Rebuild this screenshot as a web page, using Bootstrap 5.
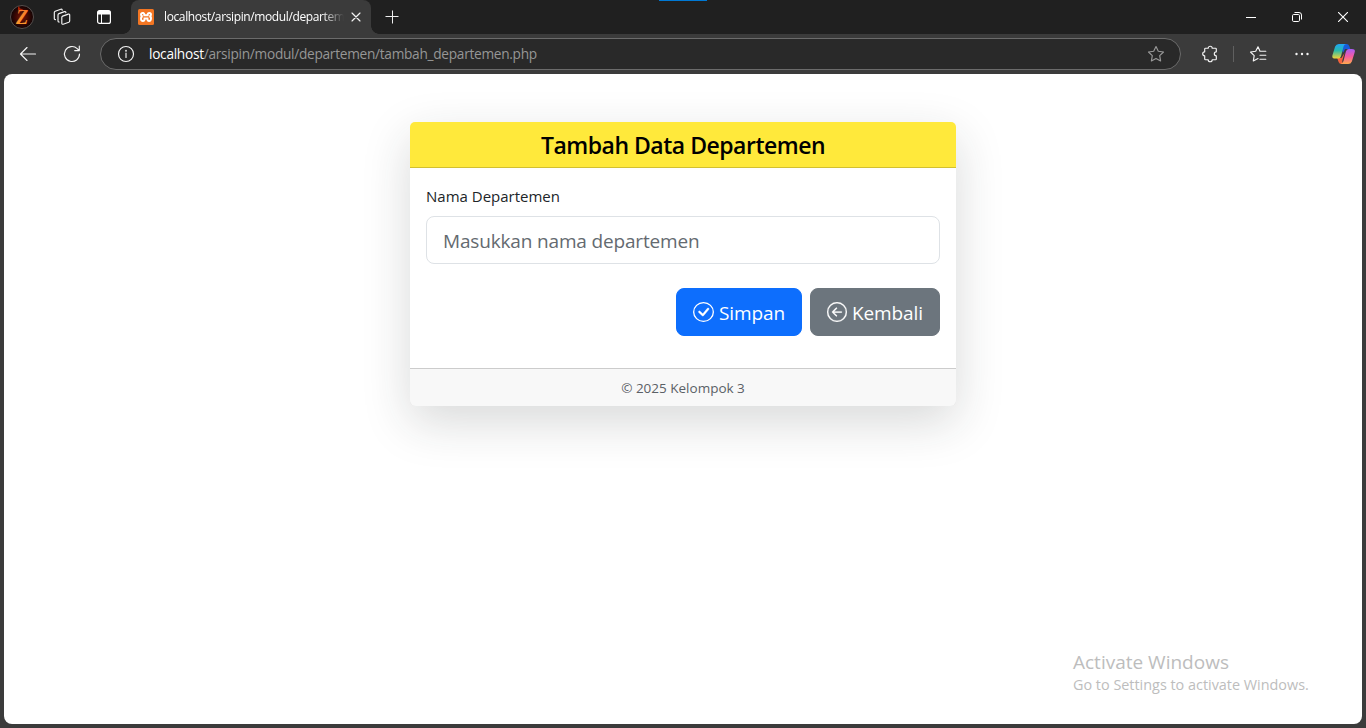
<!DOCTYPE html>
<html lang="id">
<head>
<meta charset="utf-8">
<meta name="viewport" content="width=device-width, initial-scale=1">
<title>Tambah Data Departemen</title>
<link href="https://cdn.jsdelivr.net/npm/bootstrap@5.3.0/dist/css/bootstrap.min.css" rel="stylesheet">
<script src="https://cdn.jsdelivr.net/npm/bootstrap@5.3.0/dist/js/bootstrap.bundle.min.js" defer></script>
<style>
body{font-family:"Open Sans","Noto Sans",sans-serif;background:#3b3b3b;height:728px;overflow:hidden}
svg{display:block;flex:none}
.line-icon{fill:none;stroke:#f4f4f4;stroke-width:1.15;stroke-linecap:round;stroke-linejoin:round}
.line-icon.muted-star{stroke:#999}
.tab-strip{height:34px;background:#202020}
.top-accent{width:48px;height:1px;left:659px;top:0;background:#0078d4}
.cell-36{width:36px}.cell-42{width:42px}.cell-44{width:44px}.cell-46{width:46px}.cell-48{width:48px}
.cell{height:100%;display:flex;align-items:center;justify-content:center;flex:none}
.browser-tab{width:240px;height:34px;margin-left:3px;padding:0 9px 0 7px;background:#3b3b3b;border-radius:8px 8px 0 0;position:relative}
.browser-tab::before,.browser-tab::after{content:"";position:absolute;bottom:0;width:8px;height:8px}
.browser-tab::before{left:-8px;background:radial-gradient(circle at 0 0,transparent 7.5px,#3b3b3b 8px)}
.browser-tab::after{right:-8px;background:radial-gradient(circle at 100% 0,transparent 7.5px,#3b3b3b 8px)}
.tab-label{width:182px;margin-left:10px;font-size:12px;letter-spacing:-.38px;color:#fff;white-space:nowrap;-webkit-mask-image:linear-gradient(90deg,#000 158px,transparent 180px);mask-image:linear-gradient(90deg,#000 158px,transparent 180px)}
.toolbar{height:40px}
.address{width:1081px;height:32px;background:#292929;border:1px solid #6b6b6b;border-radius:16px;padding:0 15px 0 16px;font-size:13.7px;letter-spacing:-.29px;color:#969696}
.address b{font-weight:400;color:#fff}
.url-text{margin-left:14px}
.bar-sep{width:1px;height:16px;background:#606060;margin:0 2px 0 1px}
.viewport{height:650px;margin:0 4px;border-radius:8px;padding-top:48px}
.form-card{width:546px;border:0}
.form-card .card-header{background:#ffe93b;color:#000;height:46px}
.form-card .card-footer{height:38px;font-size:13.5px;line-height:23px;color:#5b6066}
.form-title{font-size:23px;line-height:30px;font-weight:600;letter-spacing:-.49px;white-space:nowrap}
.form-card .form-label{font-size:15px;line-height:24px}
.form-card .form-control{font-size:19px;letter-spacing:-.16px;height:48px;padding-top:9px;padding-bottom:7px}
.form-card .form-control::placeholder{color:#646a70}
.form-card .btn{font-size:19px;height:48px;padding:0 16px;display:flex;align-items:center;gap:5px;white-space:nowrap}
.form-card .btn span{padding-top:2px;letter-spacing:-.1px}
.save-btn{width:126px}.back-btn{width:130px}
.form-card .btn-secondary{--bs-btn-bg:#6c757d;--bs-btn-border-color:#6c757d}
.activation{left:1073px;top:651px;color:#bdbdbd;white-space:nowrap}
.activation-title{font-size:19px;line-height:22px}
.activation-note{font-size:14.4px;line-height:23px}
</style>
</head>
<body>
<header>
  <div class="tab-strip d-flex position-relative">
    <div class="top-accent position-absolute"></div>
    <div class="cell cell-44">
      <svg width="24" height="24" viewBox="0 0 24 24"><defs><radialGradient id="ember"><stop stop-color="#7a1705"/><stop offset=".6" stop-color="#390704"/><stop offset="1" stop-color="#100404"/></radialGradient><linearGradient id="flame" x2="0" y2="1"><stop stop-color="#f4702a"/><stop offset="1" stop-color="#ffa12e"/></linearGradient></defs><circle cx="12" cy="12" r="11.5" fill="url(#ember)" stroke="#66605e" stroke-width=".8"/><path d="M8 5Q7.500 2 9 1Q9.500 4 12 4L14 5.500Z" fill="#a82206"/><text x="12" y="19" text-anchor="middle" font-family="Liberation Serif,serif" font-weight="700" font-style="italic" font-size="20" fill="url(#flame)">Z</text></svg>
    </div>
    <div class="cell cell-36">
      <svg class="line-icon" width="18" height="18" viewBox="0 0 18 18"><path d="m9.700 8.100 5.600-2q1.400-.4 1.400 1v5.700q0 1-.9 1.400l-5.600 2q-1.400.4-1.400-1V9.500q0-1 .9-1.400ZM6.200 14q-1.200.1-1.200-1.200V7q0-1 .9-1.400l5.600-2q1.300-.3 1.400 1M2.500 11.600q-1.200.1-1.200-1.200V4.600q0-1 .9-1.400l5.600-2q1.300-.3 1.400 1"/></svg>
    </div>
    <div class="cell cell-48">
      <svg width="14" height="14" viewBox="0 0 14 14"><rect x=".6" y=".6" width="12.800" height="12.800" rx="2" fill="none" stroke="#fff" stroke-width="1.2"/><path d="M.5 4.500V2.500q0-2 2-2h9q2 0 2 2v2Z" fill="#fff"/><path d="M4.500 4v9" stroke="#fff"/></svg>
    </div>
    <div class="browser-tab d-flex align-items-center">
      <svg width="16" height="16" viewBox="0 0 16 16"><rect width="16" height="16" rx="1.500" fill="#f37623"/><path d="M5.800 4H4.700Q3 4 3 5.600T4.700 7.300Q3 7.600 3 9.800T4.900 12Q6.500 12 6.500 10.300V9.500h3v.8Q9.500 12 11.100 12T13 9.800 11.300 7.300Q13 7.200 13 5.600T11.300 4Q9.700 4 9.700 5.600v.7H6.300v-.7Q6.300 4 4.700 4" fill="none" stroke="#fff" stroke-width="1.900"/></svg>
      <div class="tab-label">localhost/arsipin/modul/departem</div>
      <svg class="line-icon ms-auto" width="12" height="12" viewBox="0 0 12 12"><path d="m2 2 8 8M10 2l-8 8"/></svg>
    </div>
    <div class="cell cell-42"><svg width="14" height="14" viewBox="0 0 14 14"><path d="M7.500.5v13M.5 6.500h13" stroke="#eee"/></svg></div>
    <div class="d-flex ms-auto">
      <div class="cell cell-46"><svg width="10" height="10" viewBox="0 0 10 10"><path d="M0 5.500h10" stroke="#fff"/></svg></div>
      <div class="cell cell-46"><svg width="10" height="10" viewBox="0 0 10 10" fill="none" stroke="#fff"><rect x=".5" y="2.500" width="7" height="7" rx="1.200"/><path d="M2.500.5H7q2.500 0 2.500 2.500v4.500"/></svg></div>
      <div class="cell cell-46"><svg width="10" height="10" viewBox="0 0 10 10"><path d="m0 0 10 10M10 0 0 10" stroke="#fff" stroke-width="1.1"/></svg></div>
    </div>
  </div>
  <div class="toolbar d-flex align-items-center">
    <div class="cell cell-44 ms-1 ps-1"><svg class="line-icon" width="18" height="16" viewBox="0 0 18 16"><path d="M16.500 8H1.500M8 1.500 1.500 8 8 14.500"/></svg></div>
    <div class="cell cell-48"><svg class="line-icon" width="18" height="18" viewBox="0 0 18 18"><path d="M16.500 9a7.500 7.500 0 1 1-2.300-5.400l2 2M16.300 1v4.600h-4.600"/></svg></div>
    <div class="address d-flex align-items-center ms-1">
      <svg class="line-icon" width="18" height="18" viewBox="0 0 18 18"><circle cx="9" cy="9" r="7.500"/><path d="M9 8v4.500"/><circle cx="9" cy="5.700" r=".35"/></svg>
      <div class="text-nowrap url-text"><b>localhost</b>/arsipin/modul/departemen/tambah_departemen.php</div>
      <svg class="line-icon muted-star ms-auto" width="18" height="18" viewBox="0 0 18 18"><path d="m9 1.500 2.300 4.700 5.200.8-3.800 3.700.9 5.200L9 13.400l-4.600 2.500.9-5.200L1.500 7l5.200-.8Z"/></svg>
    </div>
    <div class="d-flex align-items-center h-100 ms-auto">
      <div class="cell cell-44"><svg class="line-icon" width="18" height="18" viewBox="0 0 18 18"><path d="M4.500 3.200h2.700a2 2 0 0 1 4 0h3.300q.8 0 .8.8v2.800a2 2 0 1 0 0 4v3.100q0 .8-.8.8h-3.300a2 2 0 0 1-4 0H4.500q-.8 0-.8-.8v-3.100a2 2 0 0 1 0-4V4q0-.8.8-.8Z"/></svg></div>
      <div class="bar-sep"></div>
      <div class="cell cell-44"><svg class="line-icon" width="18" height="18" viewBox="0 0 18 18"><path d="M11 6.200 9 1.800 6.700 6.200 1.500 7l3.700 3.700-.9 5.200L9 13.500M11 6.200h5.800M11 10.200h5.800M11 14.200h5.800"/></svg></div>
      <div class="cell cell-44"><svg width="16" height="16" viewBox="0 0 16 16" fill="#f4f4f4"><circle cx="2.500" cy="8" r="1.200"/><circle cx="8" cy="8" r="1.200"/><circle cx="13.500" cy="8" r="1.200"/></svg></div>
      <div class="cell cell-42 pe-1"><svg width="23" height="22" viewBox="0 0 22 22" preserveAspectRatio="none"><defs><linearGradient id="cp-left" x2="0" y2="1"><stop stop-color="#20a5f7"/><stop offset=".45" stop-color="#29baaa"/><stop offset="1" stop-color="#f1d438"/></linearGradient><linearGradient id="cp-right" x2="0" y2="1"><stop stop-color="#a95cf5"/><stop offset=".5" stop-color="#f55ba1"/><stop offset="1" stop-color="#ffa94c"/></linearGradient></defs><path d="M8 1h6q1.800 0 2.500 2l1 3h-5l-2 4Z" fill="#175bd8"/><path d="M5 15h4l3-5-2 7q-1 4 3 4H9q-2 0-2.700-2Z" fill="#f4623c"/><path d="M12 1H6.500Q4 1 3 3.500L.500 12Q-.5 15.500 3 15.500h3q2 0 2.700-2.500l2.200-9q.7-3 3-3Z" fill="url(#cp-left)"/><path d="M10 21h5.500q2.500 0 3.500-2.500l2.500-8.500q1.500-4-2.500-4h-3q-2 0-2.700 2.500L11 18q-.8 3-3 3Z" fill="url(#cp-right)"/></svg></div>
    </div>
  </div>
</header>

<main class="viewport bg-white">
  <div class="card form-card shadow-lg mx-auto">
    <div class="card-header py-2 text-center"><h4 class="form-title mb-0">Tambah Data Departemen</h4></div>
    <div class="card-body">
      <form onsubmit="return false">
        <div class="mb-4">
          <label for="department" class="form-label mb-2 d-block">Nama Departemen</label>
          <input id="department" type="text" class="form-control form-control-lg" placeholder="Masukkan nama departemen">
        </div>
        <div class="d-flex justify-content-end gap-2 mb-3">
          <button type="submit" class="btn btn-primary btn-lg save-btn"><svg width="21" height="20" viewBox="0 0 16 16" fill="currentColor" preserveAspectRatio="none"><path d="M8 15A7 7 0 1 1 8 1a7 7 0 0 1 0 14m0 1A8 8 0 1 0 8 0a8 8 0 0 0 0 16"/><path d="m10.970 4.970-.020.022-3.473 4.425-2.093-2.094a.75.75 0 0 0-1.060 1.060L6.970 11.030a.75.75 0 0 0 1.079-.020l3.992-4.990a.75.75 0 0 0-1.071-1.050" stroke="currentColor" stroke-width=".3"/></svg><span>Simpan</span></button>
          <a href="#" class="btn btn-secondary btn-lg back-btn"><svg width="20" height="20" viewBox="0 0 16 16" fill="currentColor"><path fill-rule="evenodd" d="M1 8a7 7 0 1 0 14 0A7 7 0 0 0 1 8m15 0A8 8 0 1 1 0 8a8 8 0 0 1 16 0m-4.500-.5a.5.5 0 0 1 0 1H5.707l2.147 2.146a.5.5 0 0 1-.708.708l-3-3a.5.5 0 0 1 0-.708l3-3a.5.5 0 1 1 .708.708L5.707 7.500z" stroke="currentColor" stroke-width=".2"/></svg><span>Kembali</span></a>
        </div>
      </form>
    </div>
    <div class="card-footer py-2 text-center">© 2025 Kelompok 3</div>
  </div>
</main>
<aside class="activation position-absolute">
  <div class="activation-title">Activate Windows</div>
  <div class="activation-note">Go to Settings to activate Windows.</div>
</aside>
</body>
</html>
